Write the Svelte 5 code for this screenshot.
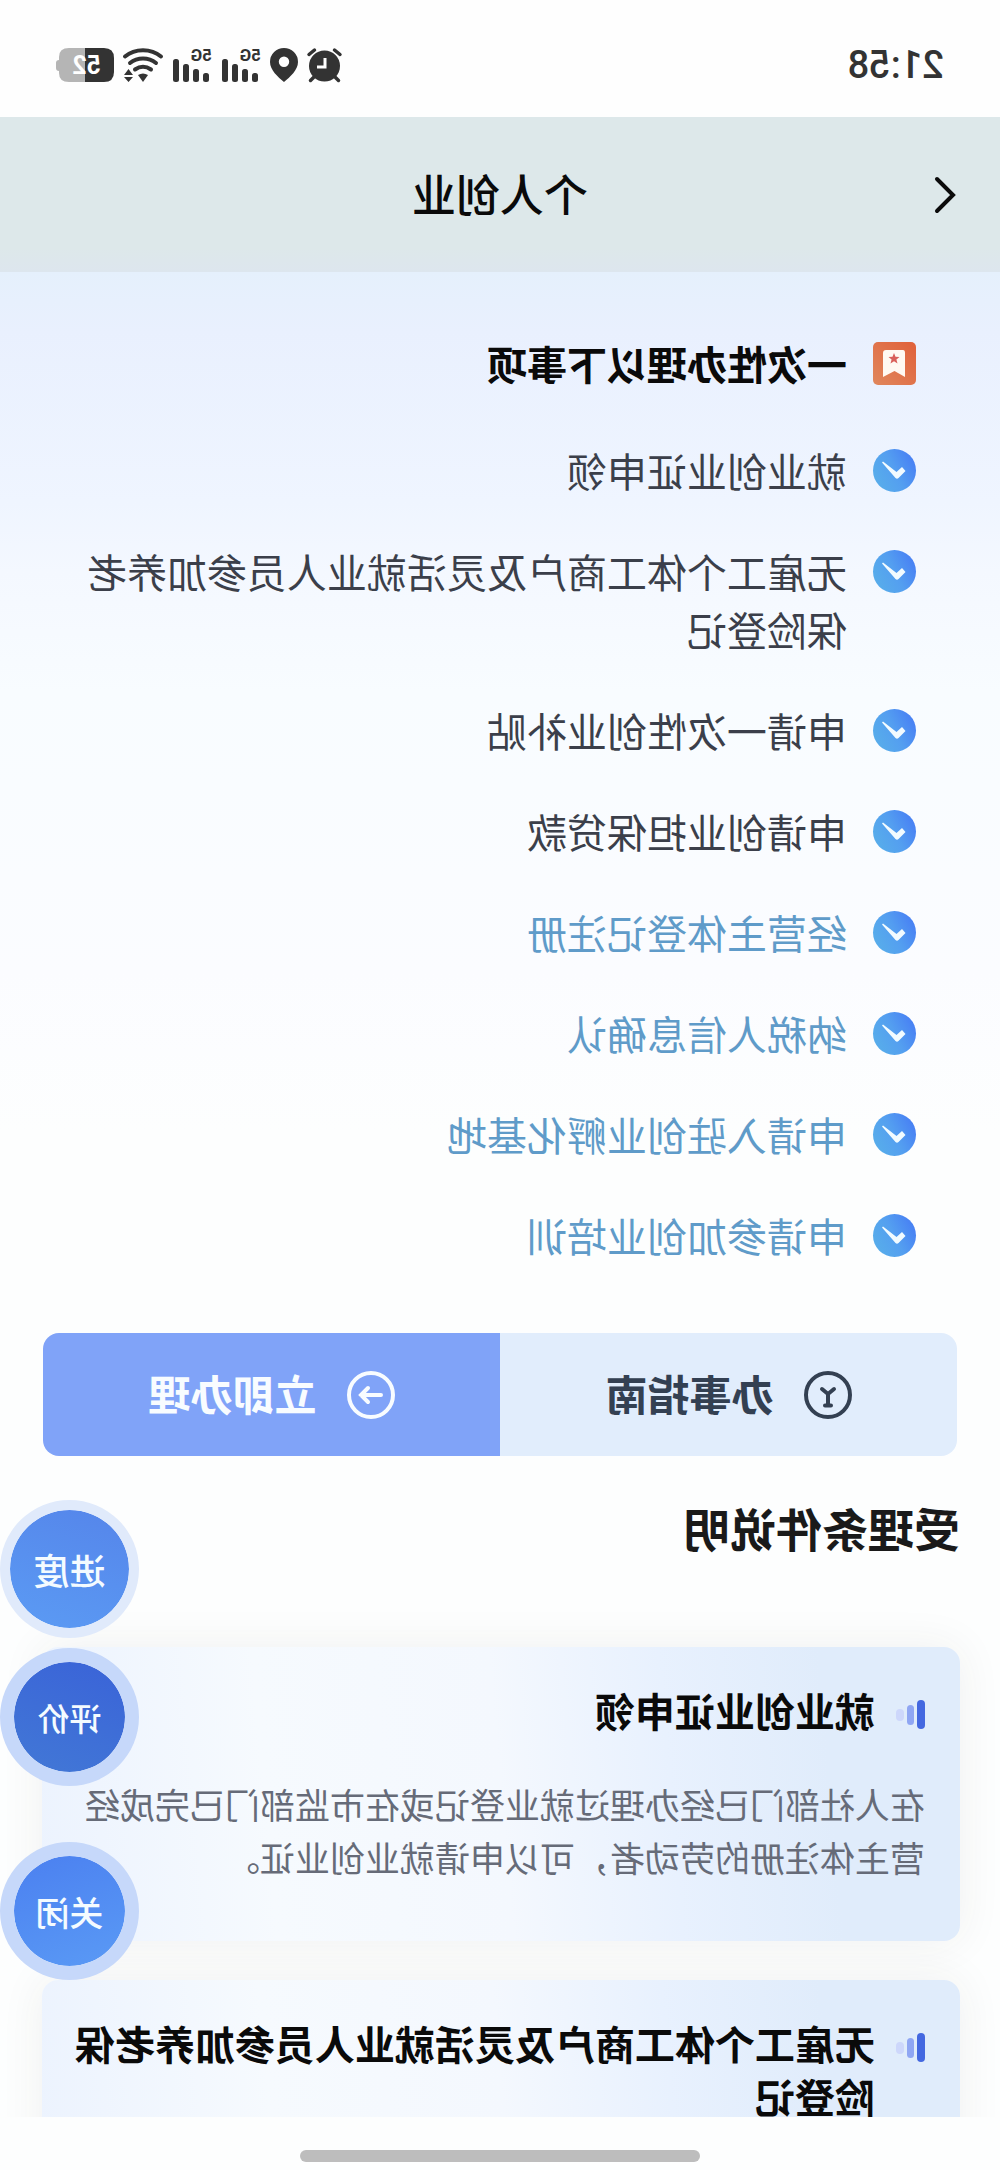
<script>
	/** @typedef {{ name: string, href?: string }} Task */

	/** @type {Task[]} */
	const tasks = [
		{ name: '就业创业证申领' },
		{ name: '无雇工个体工商户及灵活就业人员参加养老保险登记' },
		{ name: '申请一次性创业补贴' },
		{ name: '申请创业担保贷款' },
		{ name: '经营主体登记注册', href: '#register' },
		{ name: '纳税人信息确认', href: '#tax' },
		{ name: '申请入驻创业孵化基地', href: '#incubator' },
		{ name: '申请参加创业培训', href: '#training' }
	];

	/** @type {{ title: string, text?: string }[]} */
	const conditions = [
		{
			title: '就业创业证申领',
			text: '在人社部门已经办理过就业登记或在市监部门已完成经营主体注册的劳动者，可以申请就业创业证。'
		},
		{ title: '无雇工个体工商户及灵活就业人员参加养老保险登记' }
	];

	let floatsOpen = $state(true);
</script>

<div class="phone">
	<div class="status">
		<span class="time">21:58</span>
		<div class="status-icons">
			<svg width="35" height="34" viewBox="0 0 35 34">
				<circle cx="17.5" cy="18" r="15.5" fill="#333" />
				<path d="M2 6.5 7.5 2M33 6.5 27.5 2M7 29l-3.5 3.5M28 29l3.5 3.5" stroke="#333" stroke-width="3.5" stroke-linecap="round" />
				<path d="M17 10v9h8" fill="none" stroke="#fff" stroke-width="3" />
			</svg>
			<svg width="28" height="34" viewBox="0 0 28 34">
				<path d="M14 0a14 14 0 0 0-14 14c0 8 8 15 14 20 6-5 14-12 14-20A14 14 0 0 0 14 0Zm0 8.5a5.2 5.2 0 1 1 0 10.4 5.2 5.2 0 0 1 0-10.4Z" fill="#333" />
			</svg>
			{#each [1, 2] as sim (sim)}
				<svg width="40" height="34" viewBox="0 0 40 34">
					<text x="0" y="13" class="net">5G</text>
					<rect x="3" y="25" width="6" height="9" rx="2.5" fill="#333" />
					<rect x="13" y="21" width="6" height="13" rx="2.5" fill="#333" />
					<rect x="23" y="16" width="6" height="18" rx="2.5" fill="#333" />
					<rect x="33" y="11" width="6" height="23" rx="2.5" fill="#333" />
				</svg>
			{/each}
			<svg width="40" height="34" viewBox="0 0 40 34">
				<g fill="none" stroke="#333" stroke-width="4" stroke-linecap="round">
					<path d="M2 8.5c10-8.5 26-8.5 36 0" />
					<path d="M7 15c7.5-6 18.5-6 26 0" />
					<path d="M12 21.5c5-3.5 11-3.5 16 0" />
				</g>
				<path d="M15 27q5-3 10 0l-5 7Z" fill="#333" />
				<path d="M30 27l4.5-6 4.5 6ZM30 29h9l-4.5 5Z" fill="#333" />
			</svg>
			<svg width="58" height="34" viewBox="0 0 58 34">
				<path d="M29 0h16q10 0 10 9v3q3 0 3 3v5q0 3-3 3v2q0 9-10 9H29Z" fill="#b5b5b5" />
				<path d="M29 0H10Q0 0 0 10v14q0 10 10 10h19Z" fill="#333" />
				<text x="13" y="26" class="charge">52</text>
			</svg>
		</div>
	</div>

	<header>
		<button class="back" aria-label="返回">
			<svg width="22" height="38" viewBox="0 0 22 38">
				<path d="M19 3 3 19l16 16" fill="none" stroke="#0b0b0b" stroke-width="4" stroke-linecap="round" />
			</svg>
		</button>
		<h1>个人创业</h1>
	</header>

	<main>
		<section class="tasks">
			<h2 class="row">
				<svg class="icon" width="43" height="43" viewBox="0 0 43 43">
					<defs>
						<linearGradient id="book" x1="0" y1="0" x2="1" y2="1">
							<stop offset="0" stop-color="#e0603a" />
							<stop offset="1" stop-color="#e0875c" />
						</linearGradient>
					</defs>
					<rect width="43" height="43" rx="5" fill="url(#book)" />
					<path d="M13 8h17q3 0 3 3v24l-11.5-6L11 35V11q0-3 2-3Z" fill="#fff9f2" />
					<path d="m22 11 1.5 3.8 4 .2-3.1 2.5 1.1 4L22 19.2l-3.5 2.3 1.1-4-3.1-2.5 4-.2Z" fill="#d9605a" />
				</svg>
				一次性办理以下事项
			</h2>
			<ul>
				{#each tasks as task}
					<li class="row">
						<svg class="icon" width="43" height="43" viewBox="0 0 43 43">
							<defs>
								<linearGradient id="tick" x1="0" y1="0" x2="1" y2="0.5">
									<stop offset="0" stop-color="#4477f5" />
									<stop offset="0.6" stop-color="#549ff0" />
									<stop offset="1" stop-color="#57abeb" />
								</linearGradient>
							</defs>
							<circle cx="21.5" cy="21.5" r="21.5" fill="url(#tick)" />
							<path d="M34 13.5 20.5 29q-1.5 1.5-3 0L10.5 22l3.5-4 5.5 5L33 12.5Z" fill="#f2fbff" />
						</svg>
						{#if task.href}
							<a href={task.href}>{task.name}</a>
						{:else}
							<span>{task.name}</span>
						{/if}
					</li>
				{/each}
			</ul>
		</section>

		<div class="actions">
			<button class="guide">
				<svg width="48" height="48" viewBox="0 0 48 48" fill="none" stroke="currentColor" stroke-linecap="round">
					<circle cx="24" cy="24" r="22" stroke-width="4" />
					<path d="m18 18 6 5 6-5M24 23v11M21 34.5h6" stroke-width="4" />
				</svg>
				<span>办事指南</span>
			</button>
			<button class="apply">
				<svg width="48" height="48" viewBox="0 0 48 48" fill="none" stroke="currentColor" stroke-linecap="round">
					<circle cx="24" cy="24" r="22" stroke-width="4" />
					<path d="M14 24h20M27 17l7 7-7 7" stroke-width="4" />
				</svg>
				<span>立即办理</span>
			</button>
		</div>

		<section class="conditions">
			<h2>受理条件说明</h2>
			{#each conditions as condition}
				<article>
					<h3>
						<svg class="bars" width="29" height="29" viewBox="0 0 29 29">
							<rect width="8" height="29" rx="4" fill="#4468e0" />
							<rect x="11" y="5" width="7" height="20" rx="3.5" fill="#8fa6f3" />
							<rect x="21" y="9" width="8" height="12" rx="4" fill="#cdd7fb" />
						</svg>
						{condition.title}
					</h3>
					{#if condition.text}
						<p>{condition.text}</p>
					{/if}
				</article>
			{/each}
		</section>
	</main>

	{#if floatsOpen}
		<div class="floats">
			<button class="progress">进度</button>
			<button class="rate">评价</button>
			<button class="close" onclick={() => (floatsOpen = false)}>关闭</button>
		</div>
	{/if}

	<footer><div class="home"></div></footer>
</div>

<style>
	:global(body) {
		margin: 0;
		background: #fdfefe;
	}

	.phone {
		position: relative;
		display: flex;
		flex-direction: column;
		height: 100vh;
		overflow: hidden;
		transform: scaleX(-1);
		font-family: 'Noto Sans CJK SC', sans-serif;
		color: #0a0a0a;
	}

	h1,
	h2,
	h3,
	p,
	ul {
		margin: 0;
		padding: 0;
	}

	svg {
		flex: none;
		overflow: visible;
	}

	button {
		padding: 0;
		border: 0;
		background: none;
		font: inherit;
		color: inherit;
		cursor: pointer;
	}

	.status {
		display: flex;
		flex: none;
		align-items: center;
		justify-content: space-between;
		box-sizing: border-box;
		height: 117px;
		padding: 12px 56px 0;
		background: #fefefe;
	}

	.time {
		font: 500 38px Roboto, sans-serif;
		color: #333;
	}

	.status-icons {
		display: flex;
		gap: 9px;
	}

	.net {
		font: 700 17px Roboto, sans-serif;
		fill: #333;
	}

	.charge {
		font: 700 25px Roboto, sans-serif;
		fill: #fff;
	}

	header {
		display: grid;
		flex: none;
		grid-template-columns: 1fr auto 1fr;
		align-items: center;
		height: 155px;
		padding: 0 44px;
		background: linear-gradient(#dde8ea 85%, #dde6ee);
	}

	.back {
		display: flex;
		justify-self: start;
	}

	h1 {
		padding-bottom: 4px;
		font-size: 44px;
		font-weight: 500;
		line-height: 58px;
	}

	main {
		flex: 1;
		min-height: 0;
		overflow: hidden;
		background: linear-gradient(
			#e5f0fc,
			#e9f0fe 60px,
			#eff5ff 230px,
			#f4f8ff 300px,
			#f8fcff 420px,
			#fbfcff 700px,
			#fdfefe 860px
		);
	}

	.tasks {
		padding: 62px 60px 69px 84px;
	}

	.row {
		display: flex;
		gap: 26px;
		font-size: 40px;
		line-height: 58px;
	}

	.icon {
		margin-top: 8px;
	}

	.tasks h2 {
		font-weight: 700;
	}

	ul {
		display: grid;
		gap: 43px;
		margin-top: 49px;
		list-style: none;
		color: #3b3f4a;
	}

	a {
		color: #5f9bc9;
		text-decoration: none;
	}

	.actions {
		display: grid;
		grid-template-columns: 1fr 1fr;
		margin: 0 43px;
		border-radius: 16px;
		overflow: hidden;
	}

	.actions button {
		display: flex;
		align-items: center;
		justify-content: center;
		gap: 30px;
		height: 123px;
		font-size: 42px;
		font-weight: 700;
	}

	.actions span {
		padding-bottom: 4px;
	}

	.guide {
		background: #e1edfc;
		color: #334052;
	}

	.apply {
		background: #80a3f8;
		color: #f8fcff;
	}

	.conditions {
		padding: 42px 42px 39px 40px;
	}

	.conditions h2 {
		margin-bottom: 91px;
		font-size: 46px;
		line-height: 58px;
		color: #1a1a1a;
	}

	article {
		margin-bottom: 39px;
		padding: 37px 30px 58px 35px;
		border-radius: 16px;
		background: linear-gradient(95deg, #e0ecfb 15%, #e8f1fe 32%, #f4f8fe 50%, #f6fafe 75%, #ecf3fe);
		box-shadow: 0 0 45px rgba(60, 60, 40, 0.07);
	}

	h3 {
		display: flex;
		gap: 21px;
		font-size: 40px;
		font-weight: 700;
		line-height: 53px;
	}

	.bars {
		margin-top: 16px;
	}

	article p {
		margin-top: 40px;
		font-size: 35px;
		line-height: 53px;
		color: #666b78;
	}

	.floats {
		position: absolute;
		right: 0;
		bottom: 190px;
		display: grid;
		gap: 10px;
	}

	.floats button {
		box-sizing: border-box;
		width: 139px;
		height: 138px;
		border: 14px solid #c6d8fa;
		border-radius: 50%;
		background: linear-gradient(200deg, #4b80f0, #5a9af5) padding-box;
		font-size: 34px;
		font-weight: 500;
		color: #f4fbff;
	}

	.floats .progress {
		border-width: 10px;
		border-color: #e0eafb;
		background: linear-gradient(160deg, #5585ea, #5b9bf4) padding-box;
		font-size: 36px;
	}

	.floats .rate {
		background: linear-gradient(160deg, #3a63d8, #4278d6) padding-box;
		font-size: 32px;
	}

	.floats .close {
		margin-top: 46px;
	}

	footer {
		display: flex;
		flex: none;
		align-items: flex-end;
		justify-content: center;
		height: 45px;
		padding-bottom: 8px;
		background: #fdfefe;
	}

	.home {
		width: 40%;
		height: 12px;
		border-radius: 6px;
		background: #bdbdbd;
	}
</style>
